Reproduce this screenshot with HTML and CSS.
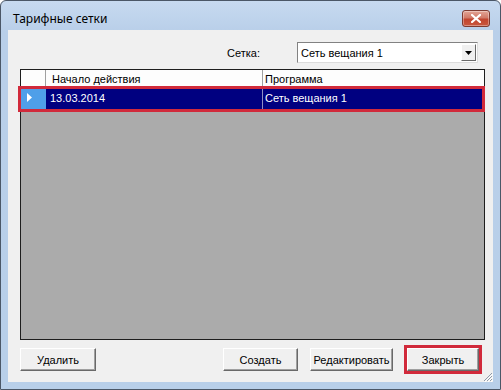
FILE: index.html
```html
<!DOCTYPE html>
<html lang="ru">
<head>
    <meta charset="UTF-8">
    <meta name="viewport" content="width=device-width, initial-scale=1.0">
    <title>Тарифные сетки</title>
    <link rel="stylesheet" href="styles.css">
</head>
<body>
    <div class="window">
        <div class="titlebar">
            <span class="title">Тарифные сетки</span>
            <button class="close" title="Закрыть">
                <svg viewBox="0 0 10 9" width="10" height="9">
                    <path d="M1 1l8 7M9 1l-8 7" stroke="#fff" stroke-width="2.2" stroke-linecap="square"></path>
                </svg>
            </button>
        </div>

        <div class="client">
            <div class="filter">
                <label class="filter-label">Сетка:</label>
                <div class="combo">
                    <span class="combo-value">Сеть вещания 1</span>
                    <span class="combo-arrow">
                        <svg viewBox="0 0 7 4" width="7" height="4"><path d="M0 0h7L3.5 4z" fill="#000"></path></svg>
                    </span>
                </div>
            </div>

            <div class="grid">
                <div class="grid-head">
                    <div class="cell rowhead"></div>
                    <div class="cell col-start">Начало действия</div>
                    <div class="cell col-program">Программа</div>
                </div>
                <div class="grid-row selected">
                    <div class="cell rowhead">
                        <svg viewBox="0 0 5 9" width="5" height="9"><path d="M0 0l5 4.5L0 9z" fill="#fff"></path></svg>
                    </div>
                    <div class="cell col-start">13.03.2014</div>
                    <div class="cell col-program">Сеть вещания 1</div>
                </div>
                <div class="mark mark-row"></div>
            </div>

            <div class="actions">
                <button class="btn btn-delete">Удалить</button>
                <button class="btn btn-create">Создать</button>
                <button class="btn btn-edit">Редактировать</button>
                <button class="btn btn-close">Закрыть</button>
            </div>

            <svg class="grip" viewBox="0 0 12 12" width="12" height="12">
                <path d="M11 3L3 11M11 6L6 11M11 9L9 11" stroke="#8e9aa8" stroke-width="1"></path>
                <path d="M12 4L4 12M12 7L7 12M12 10L10 12" stroke="#fff" stroke-width="1"></path>
            </svg>
        </div>
    </div>
</body>
</html>
```

FILE: styles.css
```css
* {
    margin: 0;
    padding: 0;
    box-sizing: border-box;
}

body {
    width: 501px;
    height: 390px;
    overflow: hidden;
    font-family: "Liberation Sans", Arial, sans-serif;
    font-size: 11px;
    color: #000;
    background: #fff;
}

.window {
    height: 390px;
    display: flex;
    flex-direction: column;
    padding: 0 7px 7px;
    border: 1px solid #4b5767;
    border-radius: 6px 6px 0 0;
    background: linear-gradient(#c7daf0 0, #b9cfe9 30px, #b8cfe9 100%);
}

/* title bar */
.titlebar {
    height: 29px;
    display: flex;
    align-items: center;
    justify-content: space-between;
    padding: 5px 3px 0 5px;
}

.title {
    font-family: "Noto Sans", "Open Sans", sans-serif;
    font-size: 12px;
    color: #000;
}

.close {
    width: 28px;
    height: 17px;
    display: flex;
    align-items: center;
    justify-content: center;
    border: 1px solid #7e3b31;
    border-radius: 3px;
    background: linear-gradient(#e3a596 0, #d17a68 45%, #c2452f 55%, #c9583f 100%);
    box-shadow: inset 0 0 0 1px rgba(255, 255, 255, 0.35);
}

/* client area */
.client {
    flex: 1;
    position: relative;
    display: flex;
    flex-direction: column;
    padding: 12px 8px 11px 12px;
    background: #f0f0f0;
}

.filter {
    height: 21px;
    display: flex;
    align-items: center;
    justify-content: flex-end;
    padding-right: 7px;
}

.filter-label {
    margin-right: 37px;
}

.combo {
    width: 181px;
    height: 21px;
    display: flex;
    align-items: center;
    border: 1px solid #828282;
    border-right-color: #dcdcdc;
    border-bottom-color: #dcdcdc;
    background: #fff;
    padding: 1px;
}

.combo-value {
    flex: 1;
    padding-left: 2px;
}

.combo-arrow {
    width: 15px;
    height: 17px;
    display: flex;
    align-items: center;
    justify-content: center;
    background: #f0f0f0;
    border: 1px solid #fff;
    border-right-color: #696969;
    border-bottom-color: #696969;
}

/* grid */
.grid {
    flex: 1;
    position: relative;
    margin-top: 6px;
    border: 1px solid #1e1e1e;
    background: #ababab;
}

.grid-head,
.grid-row {
    display: flex;
}

.grid-head {
    height: 16px;
    background: #fdfdfd;
}

.grid-row {
    height: 23px;
}

.cell {
    display: flex;
    align-items: center;
    padding-left: 5px;
    white-space: nowrap;
    border-right: 1px solid #a0a0a0;
}

.rowhead {
    width: 25px;
    padding-left: 0;
    justify-content: center;
}

.col-start {
    width: 217px;
}

.col-program {
    flex: 1;
    padding-left: 2px;
    border-right: none;
}

.grid-head .cell {
    padding-top: 1px;
}

.grid-head .col-start {
    padding-left: 6px;
}

.selected {
    background: #000080;
    color: #fff;
}

.selected .rowhead {
    background: #4f9fe9;
    border-right-color: #4f9fe9;
    justify-content: flex-start;
    padding-left: 6px;
}

.selected .col-start {
    padding-left: 4px;
    border-right-color: #8f8fc4;
}

/* highlight frames */
.mark {
    position: absolute;
    border: 3px solid #d12a3b;
    pointer-events: none;
}

.mark-row {
    left: -3px;
    top: 16px;
    width: 467px;
    height: 26px;
}

/* buttons */
.actions {
    display: flex;
    margin-top: 8px;
    padding-right: 6px;
    height: 23px;
}

.btn {
    height: 23px;
    font-family: "Liberation Sans", Arial, sans-serif;
    font-size: 11px;
    color: #000;
    background: #f0f0f0;
    border: 1px solid #fff;
    border-right-color: #696969;
    border-bottom-color: #696969;
    box-shadow: inset -1px -1px 0 #a0a0a0;
}

.btn-delete {
    width: 76px;
}

.btn-create {
    width: 75px;
    margin-left: auto;
}

.btn-edit {
    width: 83px;
    margin-left: 12px;
}

.btn-close {
    width: 72px;
    margin-left: 14px;
    outline: 3px solid #d12a3b;
    outline-offset: 0;
}

.grip {
    position: absolute;
    right: 0;
    bottom: 0;
}
```
